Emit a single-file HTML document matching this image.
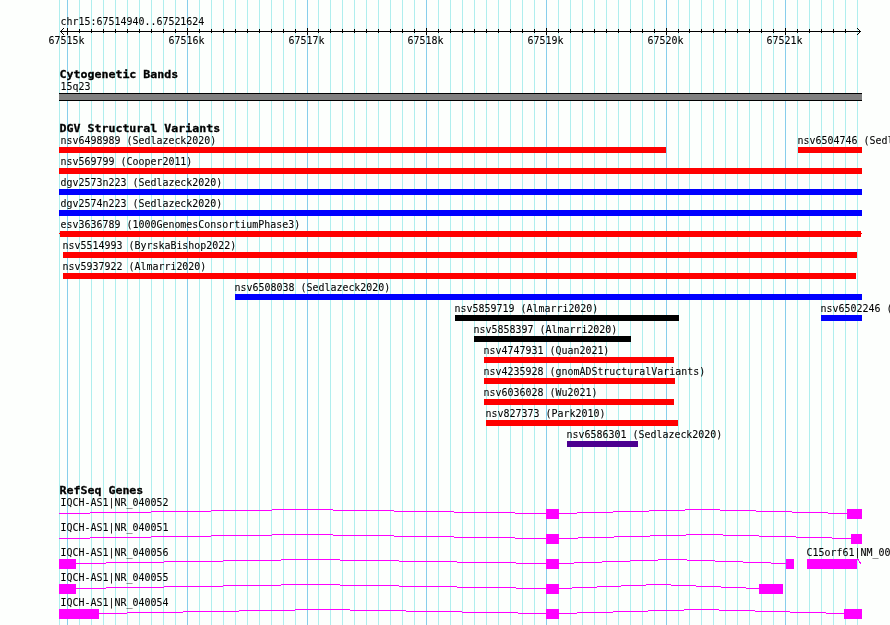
<!DOCTYPE html>
<html lang="en"><head><meta charset="utf-8"><title>chr15:67514940..67521624</title>
<style>
html,body{margin:0;padding:0;background:#fdfffd;}
body{width:890px;height:625px;overflow:hidden;}
svg{display:block;}
.s{font-family:"DejaVu Sans Mono", "Liberation Mono", monospace;font-size:11px;fill:#000;stroke:#000;stroke-width:0.1px;}
.b{font-family:"DejaVu Sans Mono", "Liberation Mono", monospace;font-size:11px;font-weight:bold;fill:#000;stroke:#000;stroke-width:0.3px;}
</style></head><body>
<svg width="890" height="625" viewBox="0 0 890 625">
<rect x="0" y="0" width="890" height="625" fill="#fdfffd"/>
<g shape-rendering="crispEdges">
<g fill="#afeeee">
<rect x="59" y="0" width="1" height="625"/>
<rect x="79" y="0" width="1" height="625"/>
<rect x="91" y="0" width="1" height="625"/>
<rect x="103" y="0" width="1" height="625"/>
<rect x="115" y="0" width="1" height="625"/>
<rect x="127" y="0" width="1" height="625"/>
<rect x="139" y="0" width="1" height="625"/>
<rect x="151" y="0" width="1" height="625"/>
<rect x="163" y="0" width="1" height="625"/>
<rect x="175" y="0" width="1" height="625"/>
<rect x="199" y="0" width="1" height="625"/>
<rect x="211" y="0" width="1" height="625"/>
<rect x="223" y="0" width="1" height="625"/>
<rect x="235" y="0" width="1" height="625"/>
<rect x="247" y="0" width="1" height="625"/>
<rect x="259" y="0" width="1" height="625"/>
<rect x="271" y="0" width="1" height="625"/>
<rect x="283" y="0" width="1" height="625"/>
<rect x="295" y="0" width="1" height="625"/>
<rect x="318" y="0" width="1" height="625"/>
<rect x="330" y="0" width="1" height="625"/>
<rect x="342" y="0" width="1" height="625"/>
<rect x="354" y="0" width="1" height="625"/>
<rect x="366" y="0" width="1" height="625"/>
<rect x="378" y="0" width="1" height="625"/>
<rect x="390" y="0" width="1" height="625"/>
<rect x="402" y="0" width="1" height="625"/>
<rect x="414" y="0" width="1" height="625"/>
<rect x="438" y="0" width="1" height="625"/>
<rect x="450" y="0" width="1" height="625"/>
<rect x="462" y="0" width="1" height="625"/>
<rect x="474" y="0" width="1" height="625"/>
<rect x="486" y="0" width="1" height="625"/>
<rect x="498" y="0" width="1" height="625"/>
<rect x="510" y="0" width="1" height="625"/>
<rect x="522" y="0" width="1" height="625"/>
<rect x="534" y="0" width="1" height="625"/>
<rect x="558" y="0" width="1" height="625"/>
<rect x="570" y="0" width="1" height="625"/>
<rect x="582" y="0" width="1" height="625"/>
<rect x="594" y="0" width="1" height="625"/>
<rect x="606" y="0" width="1" height="625"/>
<rect x="618" y="0" width="1" height="625"/>
<rect x="630" y="0" width="1" height="625"/>
<rect x="642" y="0" width="1" height="625"/>
<rect x="654" y="0" width="1" height="625"/>
<rect x="678" y="0" width="1" height="625"/>
<rect x="689" y="0" width="1" height="625"/>
<rect x="701" y="0" width="1" height="625"/>
<rect x="713" y="0" width="1" height="625"/>
<rect x="725" y="0" width="1" height="625"/>
<rect x="737" y="0" width="1" height="625"/>
<rect x="749" y="0" width="1" height="625"/>
<rect x="761" y="0" width="1" height="625"/>
<rect x="773" y="0" width="1" height="625"/>
<rect x="797" y="0" width="1" height="625"/>
<rect x="809" y="0" width="1" height="625"/>
<rect x="821" y="0" width="1" height="625"/>
<rect x="833" y="0" width="1" height="625"/>
<rect x="845" y="0" width="1" height="625"/>
<rect x="857" y="0" width="1" height="625"/>
</g>
<g fill="#87ceeb">
<rect x="67" y="0" width="1" height="625"/>
<rect x="187" y="0" width="1" height="625"/>
<rect x="307" y="0" width="1" height="625"/>
<rect x="426" y="0" width="1" height="625"/>
<rect x="546" y="0" width="1" height="625"/>
<rect x="666" y="0" width="1" height="625"/>
<rect x="785" y="0" width="1" height="625"/>
</g>
<g fill="#000">
<rect x="60" y="31" width="801" height="1"/>
<rect x="79" y="29" width="1" height="4"/>
<rect x="91" y="29" width="1" height="4"/>
<rect x="103" y="29" width="1" height="4"/>
<rect x="115" y="29" width="1" height="4"/>
<rect x="127" y="29" width="1" height="4"/>
<rect x="139" y="29" width="1" height="4"/>
<rect x="151" y="29" width="1" height="4"/>
<rect x="163" y="29" width="1" height="4"/>
<rect x="175" y="29" width="1" height="4"/>
<rect x="199" y="29" width="1" height="4"/>
<rect x="211" y="29" width="1" height="4"/>
<rect x="223" y="29" width="1" height="4"/>
<rect x="235" y="29" width="1" height="4"/>
<rect x="247" y="29" width="1" height="4"/>
<rect x="259" y="29" width="1" height="4"/>
<rect x="271" y="29" width="1" height="4"/>
<rect x="283" y="29" width="1" height="4"/>
<rect x="295" y="29" width="1" height="4"/>
<rect x="318" y="29" width="1" height="4"/>
<rect x="330" y="29" width="1" height="4"/>
<rect x="342" y="29" width="1" height="4"/>
<rect x="354" y="29" width="1" height="4"/>
<rect x="366" y="29" width="1" height="4"/>
<rect x="378" y="29" width="1" height="4"/>
<rect x="390" y="29" width="1" height="4"/>
<rect x="402" y="29" width="1" height="4"/>
<rect x="414" y="29" width="1" height="4"/>
<rect x="438" y="29" width="1" height="4"/>
<rect x="450" y="29" width="1" height="4"/>
<rect x="462" y="29" width="1" height="4"/>
<rect x="474" y="29" width="1" height="4"/>
<rect x="486" y="29" width="1" height="4"/>
<rect x="498" y="29" width="1" height="4"/>
<rect x="510" y="29" width="1" height="4"/>
<rect x="522" y="29" width="1" height="4"/>
<rect x="534" y="29" width="1" height="4"/>
<rect x="558" y="29" width="1" height="4"/>
<rect x="570" y="29" width="1" height="4"/>
<rect x="582" y="29" width="1" height="4"/>
<rect x="594" y="29" width="1" height="4"/>
<rect x="606" y="29" width="1" height="4"/>
<rect x="618" y="29" width="1" height="4"/>
<rect x="630" y="29" width="1" height="4"/>
<rect x="642" y="29" width="1" height="4"/>
<rect x="654" y="29" width="1" height="4"/>
<rect x="678" y="29" width="1" height="4"/>
<rect x="689" y="29" width="1" height="4"/>
<rect x="701" y="29" width="1" height="4"/>
<rect x="713" y="29" width="1" height="4"/>
<rect x="725" y="29" width="1" height="4"/>
<rect x="737" y="29" width="1" height="4"/>
<rect x="749" y="29" width="1" height="4"/>
<rect x="761" y="29" width="1" height="4"/>
<rect x="773" y="29" width="1" height="4"/>
<rect x="797" y="29" width="1" height="4"/>
<rect x="809" y="29" width="1" height="4"/>
<rect x="821" y="29" width="1" height="4"/>
<rect x="833" y="29" width="1" height="4"/>
<rect x="845" y="29" width="1" height="4"/>
<rect x="67" y="28" width="1" height="7"/>
<rect x="187" y="28" width="1" height="7"/>
<rect x="307" y="28" width="1" height="7"/>
<rect x="426" y="28" width="1" height="7"/>
<rect x="546" y="28" width="1" height="7"/>
<rect x="666" y="28" width="1" height="7"/>
<rect x="785" y="28" width="1" height="7"/>
<rect x="61" y="30" width="1" height="1"/>
<rect x="61" y="32" width="1" height="1"/>
<rect x="859" y="30" width="1" height="1"/>
<rect x="859" y="32" width="1" height="1"/>
<rect x="62" y="29" width="1" height="1"/>
<rect x="62" y="33" width="1" height="1"/>
<rect x="858" y="29" width="1" height="1"/>
<rect x="858" y="33" width="1" height="1"/>
<rect x="63" y="28" width="1" height="1"/>
<rect x="63" y="34" width="1" height="1"/>
<rect x="857" y="28" width="1" height="1"/>
<rect x="857" y="34" width="1" height="1"/>
</g>
<rect x="59" y="93" width="803" height="8" fill="#000"/>
<rect x="59" y="94" width="803" height="6" fill="#808080"/>
<rect x="59" y="147" width="607" height="6" fill="#ff0000"/>
<rect x="798" y="147" width="64" height="6" fill="#ff0000"/>
<rect x="59" y="168" width="803" height="6" fill="#ff0000"/>
<rect x="59" y="189" width="803" height="6" fill="#0000ff"/>
<rect x="59" y="210" width="803" height="6" fill="#0000ff"/>
<rect x="60" y="231" width="801" height="6" fill="#ff0000"/>
<rect x="63" y="252" width="794" height="6" fill="#ff0000"/>
<rect x="63" y="273" width="793" height="6" fill="#ff0000"/>
<rect x="235" y="294" width="627" height="6" fill="#0000ff"/>
<rect x="455" y="315" width="224" height="6" fill="#000000"/>
<rect x="821" y="315" width="41" height="6" fill="#0000ff"/>
<rect x="474" y="336" width="157" height="6" fill="#000000"/>
<rect x="484" y="357" width="190" height="6" fill="#ff0000"/>
<rect x="484" y="378" width="191" height="6" fill="#ff0000"/>
<rect x="484" y="399" width="190" height="6" fill="#ff0000"/>
<rect x="486" y="420" width="192" height="6" fill="#ff0000"/>
<rect x="567" y="441" width="71" height="6" fill="#4b0090"/>
<rect x="59" y="233" width="803" height="1" fill="#ff0000"/>
<g fill="#ff00ff">
<rect x="59" y="513" width="31" height="1"/>
<rect x="90" y="512" width="61" height="1"/>
<rect x="151" y="511" width="60" height="1"/>
<rect x="211" y="510" width="61" height="1"/>
<rect x="272" y="509" width="31" height="1"/>
<rect x="302" y="509" width="31" height="1"/>
<rect x="333" y="510" width="61" height="1"/>
<rect x="394" y="511" width="60" height="1"/>
<rect x="454" y="512" width="61" height="1"/>
<rect x="515" y="513" width="31" height="1"/>
<rect x="559" y="513" width="18" height="1"/>
<rect x="577" y="512" width="36" height="1"/>
<rect x="613" y="511" width="36" height="1"/>
<rect x="649" y="510" width="36" height="1"/>
<rect x="685" y="509" width="18" height="1"/>
<rect x="702" y="509" width="18" height="1"/>
<rect x="720" y="510" width="36" height="1"/>
<rect x="756" y="511" width="36" height="1"/>
<rect x="792" y="512" width="36" height="1"/>
<rect x="828" y="513" width="19" height="1"/>
<rect x="546" y="509" width="13" height="10"/>
<rect x="847" y="509" width="15" height="10"/>
<rect x="59" y="538" width="31" height="1"/>
<rect x="90" y="537" width="61" height="1"/>
<rect x="151" y="536" width="60" height="1"/>
<rect x="211" y="535" width="61" height="1"/>
<rect x="272" y="534" width="31" height="1"/>
<rect x="302" y="534" width="31" height="1"/>
<rect x="333" y="535" width="61" height="1"/>
<rect x="394" y="536" width="60" height="1"/>
<rect x="454" y="537" width="61" height="1"/>
<rect x="515" y="538" width="31" height="1"/>
<rect x="559" y="538" width="19" height="1"/>
<rect x="578" y="537" width="36" height="1"/>
<rect x="614" y="536" width="36" height="1"/>
<rect x="650" y="535" width="36" height="1"/>
<rect x="686" y="534" width="19" height="1"/>
<rect x="704" y="534" width="19" height="1"/>
<rect x="723" y="535" width="36" height="1"/>
<rect x="759" y="536" width="37" height="1"/>
<rect x="796" y="537" width="36" height="1"/>
<rect x="832" y="538" width="19" height="1"/>
<rect x="546" y="534" width="13" height="10"/>
<rect x="851" y="534" width="11" height="10"/>
<rect x="76" y="563" width="30" height="1"/>
<rect x="106" y="562" width="58" height="1"/>
<rect x="164" y="561" width="59" height="1"/>
<rect x="223" y="560" width="58" height="1"/>
<rect x="281" y="559" width="30" height="1"/>
<rect x="310" y="559" width="30" height="1"/>
<rect x="340" y="560" width="59" height="1"/>
<rect x="399" y="561" width="58" height="1"/>
<rect x="457" y="562" width="59" height="1"/>
<rect x="516" y="563" width="30" height="1"/>
<rect x="559" y="563" width="15" height="1"/>
<rect x="574" y="562" width="28" height="1"/>
<rect x="602" y="561" width="28" height="1"/>
<rect x="630" y="560" width="28" height="1"/>
<rect x="658" y="559" width="15" height="1"/>
<rect x="672" y="559" width="15" height="1"/>
<rect x="687" y="560" width="28" height="1"/>
<rect x="715" y="561" width="28" height="1"/>
<rect x="743" y="562" width="28" height="1"/>
<rect x="771" y="563" width="15" height="1"/>
<rect x="59" y="559" width="17" height="10"/>
<rect x="546" y="559" width="13" height="10"/>
<rect x="786" y="559" width="8" height="10"/>
<rect x="76" y="588" width="30" height="1"/>
<rect x="106" y="587" width="58" height="1"/>
<rect x="164" y="586" width="59" height="1"/>
<rect x="223" y="585" width="58" height="1"/>
<rect x="281" y="584" width="30" height="1"/>
<rect x="310" y="584" width="30" height="1"/>
<rect x="340" y="585" width="59" height="1"/>
<rect x="399" y="586" width="58" height="1"/>
<rect x="457" y="587" width="59" height="1"/>
<rect x="516" y="588" width="30" height="1"/>
<rect x="559" y="588" width="13" height="1"/>
<rect x="572" y="587" width="25" height="1"/>
<rect x="597" y="586" width="24" height="1"/>
<rect x="621" y="585" width="25" height="1"/>
<rect x="646" y="584" width="13" height="1"/>
<rect x="658" y="584" width="13" height="1"/>
<rect x="671" y="585" width="25" height="1"/>
<rect x="696" y="586" width="25" height="1"/>
<rect x="721" y="587" width="25" height="1"/>
<rect x="746" y="588" width="13" height="1"/>
<rect x="59" y="584" width="17" height="10"/>
<rect x="546" y="584" width="13" height="10"/>
<rect x="759" y="584" width="24" height="10"/>
<rect x="99" y="613" width="28" height="1"/>
<rect x="127" y="612" width="56" height="1"/>
<rect x="183" y="611" width="56" height="1"/>
<rect x="239" y="610" width="56" height="1"/>
<rect x="295" y="609" width="28" height="1"/>
<rect x="322" y="609" width="28" height="1"/>
<rect x="350" y="610" width="56" height="1"/>
<rect x="406" y="611" width="56" height="1"/>
<rect x="462" y="612" width="56" height="1"/>
<rect x="518" y="613" width="28" height="1"/>
<rect x="559" y="613" width="18" height="1"/>
<rect x="577" y="612" width="36" height="1"/>
<rect x="613" y="611" width="35" height="1"/>
<rect x="648" y="610" width="36" height="1"/>
<rect x="684" y="609" width="18" height="1"/>
<rect x="701" y="609" width="18" height="1"/>
<rect x="719" y="610" width="36" height="1"/>
<rect x="755" y="611" width="35" height="1"/>
<rect x="790" y="612" width="36" height="1"/>
<rect x="826" y="613" width="18" height="1"/>
<rect x="59" y="609" width="40" height="10"/>
<rect x="546" y="609" width="13" height="10"/>
<rect x="844" y="609" width="18" height="10"/>
<rect x="807" y="559" width="50" height="10"/>
<rect x="857" y="559" width="1" height="1"/>
<rect x="858" y="559" width="1" height="1"/>
<rect x="858" y="560" width="1" height="1"/>
<rect x="859" y="561" width="1" height="1"/>
<rect x="859" y="562" width="1" height="1"/>
<rect x="860" y="562" width="1" height="1"/>
<rect x="860" y="563" width="1" height="1"/>
</g>
</g>
<g opacity="0.999">
<text class="s" transform="translate(60.5,25) scale(0.9060,1)">chr15:67514940..67521624</text>
<text class="s" transform="translate(48.5,44) scale(0.9060,1)">67515k</text>
<text class="s" transform="translate(168.5,44) scale(0.9060,1)">67516k</text>
<text class="s" transform="translate(288.5,44) scale(0.9060,1)">67517k</text>
<text class="s" transform="translate(407.5,44) scale(0.9060,1)">67518k</text>
<text class="s" transform="translate(527.5,44) scale(0.9060,1)">67519k</text>
<text class="s" transform="translate(647.5,44) scale(0.9060,1)">67520k</text>
<text class="s" transform="translate(766.5,44) scale(0.9060,1)">67521k</text>
<text class="b" transform="translate(59.5,78) scale(1.0570,1)">Cytogenetic Bands</text>
<text class="s" transform="translate(60.5,90) scale(0.9060,1)">15q23</text>
<text class="b" transform="translate(59.5,132) scale(1.0570,1)">DGV Structural Variants</text>
<text class="s" transform="translate(60.5,144) scale(0.9060,1)">nsv6498989 (Sedlazeck2020)</text>
<text class="s" transform="translate(797.5,144) scale(0.9060,1)">nsv6504746 (Sedlazeck2020)</text>
<text class="s" transform="translate(60.5,165) scale(0.9060,1)">nsv569799 (Cooper2011)</text>
<text class="s" transform="translate(60.5,186) scale(0.9060,1)">dgv2573n223 (Sedlazeck2020)</text>
<text class="s" transform="translate(60.5,207) scale(0.9060,1)">dgv2574n223 (Sedlazeck2020)</text>
<text class="s" transform="translate(60.5,228) scale(0.9060,1)">esv3636789 (1000GenomesConsortiumPhase3)</text>
<text class="s" transform="translate(62.5,249) scale(0.9060,1)">nsv5514993 (ByrskaBishop2022)</text>
<text class="s" transform="translate(62.5,270) scale(0.9060,1)">nsv5937922 (Almarri2020)</text>
<text class="s" transform="translate(234.5,291) scale(0.9060,1)">nsv6508038 (Sedlazeck2020)</text>
<text class="s" transform="translate(454.5,312) scale(0.9060,1)">nsv5859719 (Almarri2020)</text>
<text class="s" transform="translate(820.5,312) scale(0.9060,1)">nsv6502246 (Sedlazeck2020)</text>
<text class="s" transform="translate(473.5,333) scale(0.9060,1)">nsv5858397 (Almarri2020)</text>
<text class="s" transform="translate(483.5,354) scale(0.9060,1)">nsv4747931 (Quan2021)</text>
<text class="s" transform="translate(483.5,375) scale(0.9060,1)">nsv4235928 (gnomADStructuralVariants)</text>
<text class="s" transform="translate(483.5,396) scale(0.9060,1)">nsv6036028 (Wu2021)</text>
<text class="s" transform="translate(485.5,417) scale(0.9060,1)">nsv827373 (Park2010)</text>
<text class="s" transform="translate(566.5,438) scale(0.9060,1)">nsv6586301 (Sedlazeck2020)</text>
<text class="b" transform="translate(59.5,494) scale(1.0570,1)">RefSeq Genes</text>
<text class="s" transform="translate(60.5,506) scale(0.9060,1)">IQCH-AS1|NR_040052</text>
<text class="s" transform="translate(60.5,531) scale(0.9060,1)">IQCH-AS1|NR_040051</text>
<text class="s" transform="translate(60.5,556) scale(0.9060,1)">IQCH-AS1|NR_040056</text>
<text class="s" transform="translate(60.5,581) scale(0.9060,1)">IQCH-AS1|NR_040055</text>
<text class="s" transform="translate(60.5,606) scale(0.9060,1)">IQCH-AS1|NR_040054</text>
<text class="s" transform="translate(806.5,556) scale(0.9060,1)">C15orf61|NM_001143936</text>
</g>
</svg>
</body></html>
